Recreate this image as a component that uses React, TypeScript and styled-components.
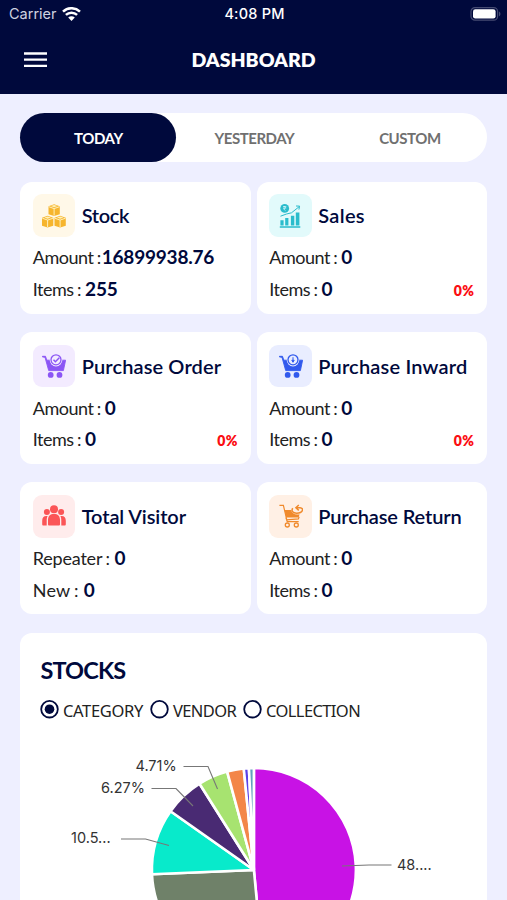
import React from "react";
import styled, { createGlobalStyle } from "styled-components";

const navy = "#00093c";

const GlobalStyle = createGlobalStyle`
  *, *::before, *::after { box-sizing: border-box; }
  body { margin: 0; background: #eeefff; overflow: hidden; }
`;

const Screen = styled.div`
  width: 507px;
  height: 900px;
  overflow: hidden;
  background: #eeefff;
  font-family: Lato, sans-serif;
  color: ${navy};
`;

const Header = styled.header`
  height: 94px;
  background: ${navy};
  color: #fff;
`;

const StatusBar = styled.div`
  display: grid;
  grid-template-columns: 1fr auto 1fr;
  align-items: center;
  height: 28px;
  padding: 0 6px 0 9px;
  font: 400 14.5px/28px Inter, sans-serif;
`;

const Carrier = styled.div`
  display: flex;
  align-items: center;
  gap: 5px;
  color: #cfd2e0;
`;

const Clock = styled.div`
  margin-left: -1px;
  font-weight: 500;
  letter-spacing: 0.2px;
`;

const Battery = styled.div`
  display: flex;
  justify-content: flex-end;
`;

const NavBar = styled.div`
  display: grid;
  grid-template-columns: 60px 1fr 60px;
  align-items: center;
  height: 64px;
`;

const MenuButton = styled.button`
  display: flex;
  padding: 0 0 0 24px;
  border: 0;
  background: none;
`;

const PageTitle = styled.h1`
  margin: 0;
  text-align: center;
  font-size: 19.5px;
  font-weight: 800;
  line-height: 24px;
`;

const Content = styled.main`
  padding: 19px 19px 0 20.4px;
`;

const Tabs = styled.div`
  display: grid;
  grid-template-columns: 156px 156px 1fr;
  width: 467px;
  height: 49px;
  border-radius: 25px;
  background: #fff;
`;

const Tab = styled.button<{ $active?: boolean }>`
  padding: 0;
  border: 0;
  border-radius: 25px;
  background: ${(p) => (p.$active ? navy : "transparent")};
  color: ${(p) => (p.$active ? "#fff" : "#707070")};
  font: 700 15px/20px Lato, sans-serif;
  letter-spacing: -0.45px;
`;

const Cards = styled.div`
  display: grid;
  grid-template-columns: 230.5px 230.5px;
  column-gap: 6px;
  row-gap: 18.3px;
  margin-top: 19.6px;
`;

const Card = styled.section`
  height: 132px;
  padding: 12.9px 13px 0 12.4px;
  border-radius: 12px;
  background: #fff;
`;

const CardHead = styled.div`
  display: flex;
  align-items: center;
  gap: 6.4px;
  height: 42.5px;
`;

const IconTile = styled.div<{ $bg: string }>`
  display: flex;
  align-items: center;
  justify-content: center;
  width: 42.5px;
  height: 42.5px;
  border-radius: 9px;
  background: ${(p) => p.$bg};
`;

const CardTitle = styled.h2<{ $track: number }>`
  margin: -1px 0 0;
  font-size: 20px;
  font-weight: 600;
  line-height: 24px;
  white-space: nowrap;
  letter-spacing: ${(p) => p.$track}px;
`;

const Line = styled.div<{ $first?: boolean }>`
  display: flex;
  align-items: baseline;
  height: 31.7px;
  margin-top: ${(p) => (p.$first ? 4.3 : 0)}px;
  line-height: 32px;
  white-space: pre;
`;

const Label = styled.span<{ $track: number }>`
  color: #222;
  font-size: 18px;
  letter-spacing: ${(p) => p.$track}px;
  word-spacing: -0.8px;
`;

const Value = styled.span<{ $gap: number }>`
  margin-left: ${(p) => p.$gap}px;
  font-size: 19px;
  font-weight: 700;
  letter-spacing: -0.2px;
`;

const Change = styled.span`
  margin: 0 0 0 auto;
  color: #fb0d12;
  font-size: 14px;
  font-weight: 800;
  line-height: 30px;
  letter-spacing: 0.4px;
`;

const StockPanel = styled.section`
  height: 300px;
  margin: 19.3px 0 0;
  width: 467px;
  padding: 22.400px 0 0 20px;
  border-radius: 12px;
  background: #fff;
`;

const PanelTitle = styled.h2`
  margin: 0;
  font-size: 23.5px;
  font-weight: 700;
  line-height: 28px;
  letter-spacing: -0.85px;
`;

const Radios = styled.div`
  display: flex;
  align-items: center;
  height: 20px;
  margin: 16px 0 0 -0.4px;
`;

const RadioLabel = styled.span<{ $width: number; $track: number }>`
  width: ${(p) => p.$width}px;
  margin-left: 4px;
  padding-top: 3px;
  color: #222;
  font: 400 16.5px/20px "Noto Sans", sans-serif;
  letter-spacing: ${(p) => p.$track}px;
  white-space: nowrap;
`;

const Chart = styled.svg`
  display: block;
  margin: 14px 0 0 -20.4px;
  font-family: Inter, sans-serif;
`;

const StockIcon = () => (
  <svg width="24" height="24" viewBox="0 0 24 24">
    {[[6.5, 0], [0, 11.5], [12.5, 11.5]].map(([x, y]) => (
      <g key={x} transform={`translate(${x} ${y})`}>
        <path d="M0 2.2 5.6.2l5.7 2v8L5.6 12 0 10.200Z" fill="#f6b52e" />
        <path d="m.3 2.700 5.300 1.900 5.400-1.900M5.600 4.600v7" fill="none" stroke="#fff5cc" strokeWidth=".9" />
        <path d="m2.300 2 3.300-1.100 3.400 1.100-3.400 1.200Z" fill="#fff0b8" />
      </g>
    ))}
  </svg>
);

const SalesIcon = () => (
  <svg width="24" height="24" viewBox="0 0 24 24" fill="#2abccc">
    <circle cx="5.7" cy="4.4" r="4.4" />
    <path d="M4.200 2.500h3.100M4.200 4h3.100M4.500 2.500c2.500 0 2.500 2.300 0 2.300l2 1.800" fill="none" stroke="#e4fbfc" strokeWidth=".7" />
    <path d="M1.400 16.300h3.200v5.300H1.400zM6.200 14h3.200v7.600H6.200zM11.900 11.800h3.400v9.800h-3.400zM16.800 8.500h3.600v13.100h-3.600zM.8 22.300h20.500v1.400H.8z" />
    <path d="m1.500 12.200 6-2.200 5-1.200 7.500-6M17 2l3.600.1-.7 3.500" fill="none" stroke="#2abccc" strokeWidth="1" />
  </svg>
);

const CartIcon = ({ color, paper, inward }: { color: string; paper: string; inward?: boolean }) => (
  <svg width="24" height="24" viewBox="0 0 24 24">
    <path d="M.4 2.300h3.100l1.300 3.900h18.800l-2.200 10.400H6.700L3 3.300.4 2.900Z" fill={color} stroke={color} strokeWidth=".9" strokeLinejoin="round" />
    <circle cx="8.700" cy="20.900" r="2.900" fill={color} />
    <circle cx="17.500" cy="20.900" r="2.900" fill={color} />
    <circle cx="14" cy="6.100" r="6.300" fill={paper} />
    <circle cx="14" cy="5.800" r="5" fill={paper} stroke={color} strokeWidth="1.300" />
    {inward ? (
      <path d="M14 3.200v3m-1.200.1L14 8.300l1.200-2Z" fill={color} stroke={color} strokeWidth="1" />
    ) : (
      <path d="m11.500 5.800 1.900 1.900 3.900-4" fill="none" stroke={color} strokeWidth="1.500" />
    )}
  </svg>
);

const VisitorsIcon = () => (
  <svg width="24" height="24" viewBox="0 0 24 24" fill="#fb5557">
    <circle cx="4.900" cy="8" r="3" />
    <circle cx="19.100" cy="8" r="3" />
    <path d="M.2 20.200v-3.400c0-3.600 1.800-5.200 5.400-4.700-.7 1.400-.9 2.800-.9 4.600v4.800H1.500c-.9 0-1.300-.4-1.300-1.300ZM23.800 20.200v-3.400c0-3.600-1.800-5.200-5.400-4.700.7 1.400.9 2.800.9 4.600v4.800h3.200c.9 0 1.300-.4 1.300-1.300Z" />
    <circle cx="12" cy="5.300" r="4" />
    <path d="M6 20.200v-3.900c0-4.300 2.200-6.200 6-6.200s6 1.900 6 6.200v3.900c0 .8-.5 1.300-1.300 1.300H7.300c-.8 0-1.300-.5-1.300-1.300Z" />
  </svg>
);

const ReturnIcon = () => (
  <svg width="24" height="24" viewBox="0 0 24 24" fill="none" stroke="#f08a2c">
    <path d="M.4 1.300h4l3.800 16.400h11.500" strokeWidth="1.200" />
    <path d="M5.500 6h6.700c.4 3.500 3.700 5 8.300 4.300l-.9 3.200H7.300Z" fill="#f08a2c" stroke="none" />
    <path d="m7 13.600.6 2.200 11.800-.9.700-2.200" strokeWidth="1.200" />
    <path d="M13.800 4.300c-2 2.700.2 5 4 4.900 6.100-.1 7.600-5 3.300-5.500h-4m2.700-2.700-2.900 2.700 2.900 2.700" strokeWidth="1.500" />
    <circle cx="8.300" cy="21" r="2" strokeWidth="1.300" />
    <circle cx="17.300" cy="21" r="2" strokeWidth="1.300" />
  </svg>
);

const WifiIcon = () => (
  <svg width="19" height="15" viewBox="0 0 19 15" fill="none" stroke="#fff" strokeWidth="2.5">
    <path d="M1 4.600c4.800-4.500 12.200-4.500 17 0M3.900 7.900c3.200-3 8-3 11.200 0" />
    <path d="M6.200 10.600c1.800-1.700 4.800-1.700 6.600 0L9.500 14Z" fill="#fff" stroke="none" />
  </svg>
);

const BatteryIcon = () => (
  <svg width="31" height="15" viewBox="0 0 31 15">
    <rect x="1" y=".6" width="26.600" height="12.600" rx="4" fill="none" stroke="#454b72" strokeWidth="1.200" />
    <rect x="3" y="2.200" width="22.600" height="9.400" rx="2.300" fill="#fff" />
    <path d="M29 4.500v4.800c1.900-.7 1.900-4.100 0-4.800Z" fill="#454b72" />
  </svg>
);

const RadioMark = ({ checked }: { checked?: boolean }) => (
  <svg width="19" height="19" viewBox="0 0 19 19">
    <circle cx="9.500" cy="9.200" r="8.300" fill="none" stroke={navy} strokeWidth="1.800" />
    {checked && <circle cx="9.500" cy="9.200" r="4.800" fill={navy} />}
  </svg>
);

type Row = { label: string; value: string; track: number; gap: number };
type Stat = {
  title: string;
  track: number;
  bg: string;
  icon: React.ReactNode;
  rows: Row[];
  change?: string;
};

const amount: Row = { label: "Amount :", value: "0", track: -0.5, gap: 4.2 };
const items: Row = { label: "Items :", value: "0", track: -0.5, gap: 4.2 };

const stats: Stat[] = [
  { title: "Stock", track: -0.35, bg: "#fff8e8", icon: <StockIcon />, rows: [{ ...amount, value: "16899938.76", gap: 1 }, { ...items, value: "255" }] },
  { title: "Sales", track: 0.35, bg: "#e2fafb", icon: <SalesIcon />, rows: [amount, items], change: "0%" },
  { title: "Purchase Order", track: 0.12, bg: "#f3ebff", icon: <CartIcon color="#8b55f5" paper="#f3ebff" />, rows: [amount, items], change: "0%" },
  { title: "Purchase Inward", track: 0.18, bg: "#e9edff", icon: <CartIcon color="#3159ed" paper="#e9edff" inward />, rows: [amount, items], change: "0%" },
  { title: "Total Visitor", track: -0.1, bg: "#ffecec", icon: <VisitorsIcon />, rows: [{ label: "Repeater :", value: "0", track: -0.2, gap: 4.7 }, { label: "New :", value: "0", track: 0.2, gap: 5 }] },
  { title: "Purchase Return", track: -0.12, bg: "#fff0e5", icon: <ReturnIcon />, rows: [amount, items] },
];

const slices = [
  { from: 0, to: 174.6, color: "#c812e5" },
  { from: 174.6, to: 267.6, color: "#6f8169" },
  { from: 267.6, to: 305.2, color: "#08eacb" },
  { from: 305.2, to: 327.8, color: "#492a73" },
  { from: 327.8, to: 344.8, color: "#a7e370" },
  { from: 344.8, to: 354.3, color: "#f38649" },
  { from: 354.3, to: 357.2, color: "#5c41e8" },
  { from: 357.2, to: 360, color: "#62a0be" },
];

const slicePath = (from: number, to: number) => {
  const cx = 233.9;
  const cy = 136;
  const r = 102;
  const at = (deg: number) => {
    const a = (deg * Math.PI) / 180;
    return `${cx + r * Math.sin(a)} ${cy - r * Math.cos(a)}`;
  };
  return `M${cx} ${cy}L${at(from)}A${r} ${r} 0 0 1 ${at(to)}Z`;
};

export default function App() {
  return (
    <Screen>
      <GlobalStyle />
      <Header>
        <StatusBar>
          <Carrier>Carrier<WifiIcon /></Carrier>
          <Clock>4:08 PM</Clock>
          <Battery><BatteryIcon /></Battery>
        </StatusBar>
        <NavBar>
          <MenuButton aria-label="Menu">
            <svg width="23" height="16" viewBox="0 0 23 16" stroke="#fff" strokeWidth="2.300">
              <path d="M0 1.500h23M0 7.700h23M0 13.900h23" />
            </svg>
          </MenuButton>
          <PageTitle>DASHBOARD</PageTitle>
        </NavBar>
      </Header>
      <Content>
        <Tabs>
          <Tab $active>TODAY</Tab>
          <Tab>YESTERDAY</Tab>
          <Tab>CUSTOM</Tab>
        </Tabs>
        <Cards>
          {stats.map((s) => (
            <Card key={s.title}>
              <CardHead>
                <IconTile $bg={s.bg}>{s.icon}</IconTile>
                <CardTitle $track={s.track}>{s.title}</CardTitle>
              </CardHead>
              {s.rows.map((r, i) => (
                <Line key={r.label} $first={i === 0}>
                  <Label $track={r.track}>{r.label}</Label>
                  <Value $gap={r.gap}>{r.value}</Value>
                  {i === 1 && s.change && <Change>{s.change}</Change>}
                </Line>
              ))}
            </Card>
          ))}
        </Cards>
        <StockPanel>
          <PanelTitle>STOCKS</PanelTitle>
          <Radios>
            <RadioMark checked /><RadioLabel $width={87} $track={-0.35}>CATEGORY</RadioLabel>
            <RadioMark /><RadioLabel $width={70} $track={-0.6}>VENDOR</RadioLabel>
            <RadioMark /><RadioLabel $width={100} $track={-0.6}>COLLECTION</RadioLabel>
          </Radios>
          <Chart width="467" height="240" viewBox="0 0 467 240">
            {slices.map((s) => (
              <path key={s.from} d={slicePath(s.from, s.to)} fill={s.color} stroke="#fff" strokeWidth="2.600" strokeLinejoin="bevel" />
            ))}
            <g fill="none" stroke="#777" strokeWidth="1.100">
              <path d="M163.500 32.500h24.500l9.500 22.500" />
              <path d="M131.500 54.500h24.500l17 17.500" />
              <path d="M101 105h24.500l23.500 6.500" />
              <path d="M322 132l27-1h22.500" />
            </g>
            <g fill="#333" fontSize="14.500">
              <text x="115.500" y="37">4.71%</text>
              <text x="81" y="59">6.27%</text>
              <text x="51" y="109">10.5...</text>
              <text x="377" y="136">48....</text>
            </g>
          </Chart>
        </StockPanel>
      </Content>
    </Screen>
  );
}
